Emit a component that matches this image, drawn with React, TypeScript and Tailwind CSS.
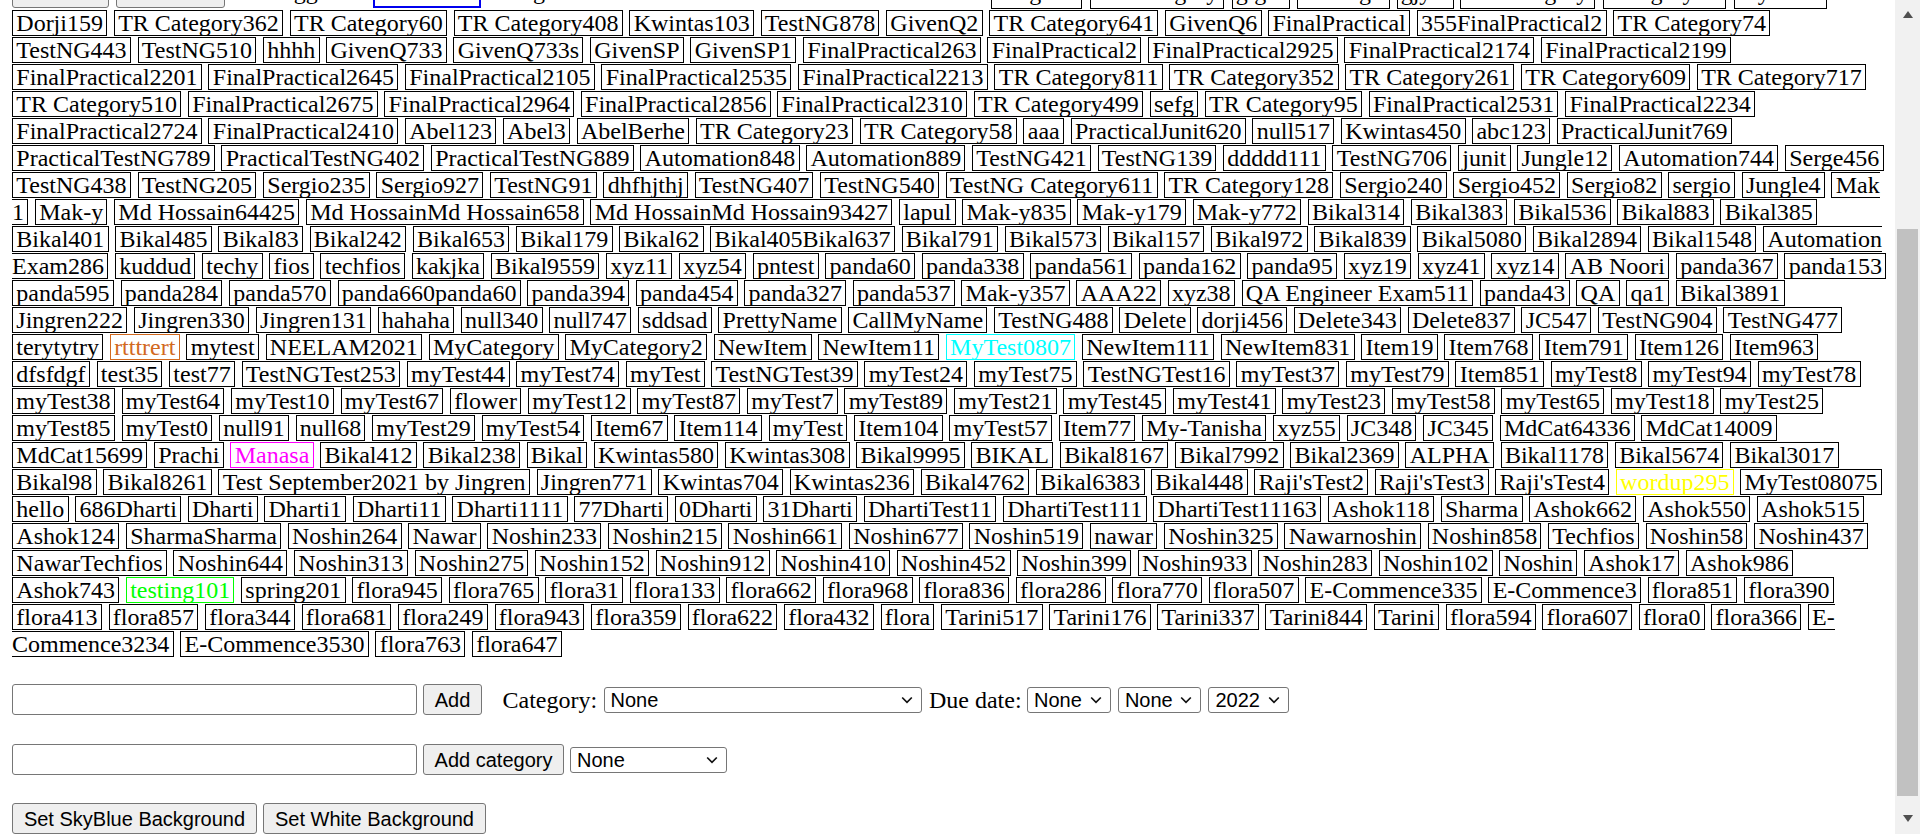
import React from "react";

type Obj = { t: string; c?: "o" | "c" | "m" | "y" | "g"; s?: "a" | "b" };
type It = string | Obj;

const ROWS: It[][] = [
  ["Dorji159", "TR Category362", "TR Category60", "TR Category408", "Kwintas103", "TestNG878", "GivenQ2", "TR Category641", "GivenQ6", "FinalPractical", "355FinalPractical2", "TR Category74"],
  ["TestNG443", "TestNG510", "hhhh", "GivenQ733", "GivenQ733s", "GivenSP", "GivenSP1", "FinalPractical263", "FinalPractical2", "FinalPractical2925", "FinalPractical2174", "FinalPractical2199"],
  ["FinalPractical2201", "FinalPractical2645", "FinalPractical2105", "FinalPractical2535", "FinalPractical2213", "TR Category811", "TR Category352", "TR Category261", "TR Category609", "TR Category717"],
  ["TR Category510", "FinalPractical2675", "FinalPractical2964", "FinalPractical2856", "FinalPractical2310", "TR Category499", "sefg", "TR Category95", "FinalPractical2531", "FinalPractical2234"],
  ["FinalPractical2724", "FinalPractical2410", "Abel123", "Abel3", "AbelBerhe", "TR Category23", "TR Category58", "aaa", "PracticalJunit620", "null517", "Kwintas450", "abc123", "PracticalJunit769"],
  ["PracticalTestNG789", "PracticalTestNG402", "PracticalTestNG889", "Automation848", "Automation889", "TestNG421", "TestNG139", "ddddd111", "TestNG706", "junit", "Jungle12", "Automation744", "Serge456"],
  ["TestNG438", "TestNG205", "Sergio235", "Sergio927", "TestNG91", "dhfhjthj", "TestNG407", "TestNG540", "TestNG Category611", "TR Category128", "Sergio240", "Sergio452", "Sergio82", "sergio", "Jungle4", { t: "Mak", s: "a" }],
  [{ t: "1", s: "b" }, "Mak-y", "Md Hossain64425", "Md HossainMd Hossain658", "Md HossainMd Hossain93427", "lapul", "Mak-y835", "Mak-y179", "Mak-y772", "Bikal314", "Bikal383", "Bikal536", "Bikal883", "Bikal385"],
  ["Bikal401", "Bikal485", "Bikal83", "Bikal242", "Bikal653", "Bikal179", "Bikal62", "Bikal405Bikal637", "Bikal791", "Bikal573", "Bikal157", "Bikal972", "Bikal839", "Bikal5080", "Bikal2894", "Bikal1548", { t: "Automation", s: "a" }],
  [{ t: "Exam286", s: "b" }, "kuddud", "techy", "fios", "techfios", "kakjka", "Bikal9559", "xyz11", "xyz54", "pntest", "panda60", "panda338", "panda561", "panda162", "panda95", "xyz19", "xyz41", "xyz14", "AB Noori", "panda367", "panda153"],
  ["panda595", "panda284", "panda570", "panda660panda60", "panda394", "panda454", "panda327", "panda537", "Mak-y357", "AAA22", "xyz38", "QA Engineer Exam511", "panda43", "QA", "qa1", "Bikal3891"],
  ["Jingren222", "Jingren330", "Jingren131", "hahaha", "null340", "null747", "sddsad", "PrettyName", "CallMyName", "TestNG488", "Delete", "dorji456", "Delete343", "Delete837", "JC547", "TestNG904", "TestNG477"],
  ["terytytry", { t: "rtttrert", c: "o" }, "mytest", "NEELAM2021", "MyCategory", "MyCategory2", "NewItem", "NewItem11", { t: "MyTest0807", c: "c" }, "NewItem111", "NewItem831", "Item19", "Item768", "Item791", "Item126", "Item963"],
  ["dfsfdgf", "test35", "test77", "TestNGTest253", "myTest44", "myTest74", "myTest", "TestNGTest39", "myTest24", "myTest75", "TestNGTest16", "myTest37", "myTest79", "Item851", "myTest8", "myTest94", "myTest78"],
  ["myTest38", "myTest64", "myTest10", "myTest67", "flower", "myTest12", "myTest87", "myTest7", "myTest89", "myTest21", "myTest45", "myTest41", "myTest23", "myTest58", "myTest65", "myTest18", "myTest25"],
  ["myTest85", "myTest0", "null91", "null68", "myTest29", "myTest54", "Item67", "Item114", "myTest", "Item104", "myTest57", "Item77", "My-Tanisha", "xyz55", "JC348", "JC345", "MdCat64336", "MdCat14009"],
  ["MdCat15699", "Prachi", { t: "Manasa", c: "m" }, "Bikal412", "Bikal238", "Bikal", "Kwintas580", "Kwintas308", "Bikal9995", "BIKAL", "Bikal8167", "Bikal7992", "Bikal2369", "ALPHA", "Bikal1178", "Bikal5674", "Bikal3017"],
  ["Bikal98", "Bikal8261", "Test September2021 by Jingren", "Jingren771", "Kwintas704", "Kwintas236", "Bikal4762", "Bikal6383", "Bikal448", "Raji'sTest2", "Raji'sTest3", "Raji'sTest4", { t: "wordup295", c: "y" }, "MyTest08075"],
  ["hello", "686Dharti", "Dharti", "Dharti1", "Dharti11", "Dharti1111", "77Dharti", "0Dharti", "31Dharti", "DhartiTest11", "DhartiTest111", "DhartiTest11163", "Ashok118", "Sharma", "Ashok662", "Ashok550", "Ashok515"],
  ["Ashok124", "SharmaSharma", "Noshin264", "Nawar", "Noshin233", "Noshin215", "Noshin661", "Noshin677", "Noshin519", "nawar", "Noshin325", "Nawarnoshin", "Noshin858", "Techfios", "Noshin58", "Noshin437"],
  ["NawarTechfios", "Noshin644", "Noshin313", "Noshin275", "Noshin152", "Noshin912", "Noshin410", "Noshin452", "Noshin399", "Noshin933", "Noshin283", "Noshin102", "Noshin", "Ashok17", "Ashok986"],
  ["Ashok743", { t: "testing101", c: "g" }, "spring201", "flora945", "flora765", "flora31", "flora133", "flora662", "flora968", "flora836", "flora286", "flora770", "flora507", "E-Commence335", "E-Commence3", "flora851", "flora390"],
  ["flora413", "flora857", "flora344", "flora681", "flora249", "flora943", "flora359", "flora622", "flora432", "flora", "Tarini517", "Tarini176", "Tarini337", "Tarini844", "Tarini", "flora594", "flora607", "flora0", "flora366", { t: "E-", s: "a" }],
  [{ t: "Commence3234", s: "b" }, "E-Commence3530", "flora763", "flora647"],
];

const COLOR: Record<string, string> = {
  o: "border-[#d2691e] text-[#d2691e]",
  c: "border-[#00ffff] text-[#00ffff]",
  m: "border-[#ff00ff] text-[#ff00ff]",
  y: "border-[#ffff00] text-[#ffff00]",
  g: "border-[#00ff00] text-[#00ff00]",
};

function Item({ it }: { it: It }) {
  const o: Obj = typeof it === "string" ? { t: it } : it;
  let side = "border-x px-[3.3px]";
  if (o.s === "a") side = "border-l pl-[3.3px]";
  if (o.s === "b") side = "border-r pr-[3.3px]";
  const col = o.c ? COLOR[o.c] : "border-black text-black";
  return (
    <span className={`box-border h-[26px] shrink-0 whitespace-pre border-y leading-[25px] ${side} ${col}`}>
      {o.t}
    </span>
  );
}

const ctl = "font-['Liberation_Sans',Arial,sans-serif] text-[20px] text-black";
const serif = "font-['Liberation_Serif','Times_New_Roman',serif] text-[24px] text-black";

function Sel({ label, cls }: { label: string; cls: string }) {
  return (
    <div className={`box-border flex h-[26px] shrink-0 items-center justify-between rounded-[3px] border border-[#767676] bg-white pl-[6px] pr-[8px] ${ctl} ${cls}`}>
      <span className="leading-none">{label}</span>
      <svg width="12" height="8" viewBox="0 0 12 8">
        <path d="M1.2 1.5 L6 6.3 L10.8 1.5" stroke="#111" strokeWidth="1.7" fill="none" />
      </svg>
    </div>
  );
}

const btn = `box-border h-[31px] shrink-0 rounded-[3px] border border-[#767676] bg-[#efefef] leading-none ${ctl}`;
const inp = "box-border h-[31px] w-[405px] shrink-0 rounded-[3px] border border-[#767676] bg-white";
const topBox = "box-border h-[26px] shrink-0 overflow-hidden border border-black px-[3px] leading-[17px]";

export default function App() {
  return (
    <div className="flex h-[834px] w-[1920px] overflow-hidden bg-white">
      <div className={`flex min-w-0 flex-1 flex-col overflow-hidden pl-[12px] ${serif}`}>
        {/* partially scrolled-off row */}
        <div className="-mt-[17.4px] flex h-[27px] shrink-0 items-start whitespace-nowrap">
          <span className="box-border h-[25px] w-[97px] shrink-0 rounded-[3px] border border-[#767676] bg-[#efefef]" />
          <span className="ml-[7px] box-border h-[25px] w-[109px] shrink-0 rounded-[3px] border border-[#767676] bg-[#efefef]" />
          <span className="ml-[42px] shrink-0 leading-[17px]">Logged</span>
          <span className="ml-[33px] box-border h-[25px] w-[108px] shrink-0 border-2 border-[#0000ee]" />
          <span className="ml-[25px] shrink-0 leading-[17px]">Log out</span>
          <span className={`ml-[409px] w-[91px] ${topBox}`}>Bing</span>
          <span className={`ml-[8px] w-[134px] ${topBox}`}>TR Category</span>
          <span className={`ml-[8px] w-[58px] ${topBox}`}>gig</span>
          <span className={`ml-[7px] w-[93px] ${topBox}`}>Testing</span>
          <span className={`ml-[7px] w-[57px] ${topBox}`}>gjy</span>
          <span className={`ml-[6px] w-[135px] ${topBox}`}>TR Category1</span>
          <span className={`ml-[8px] w-[123px] ${topBox}`}>Category12</span>
          <span className={`ml-[8px] w-[93px] ${topBox}`}>Jay</span>
        </div>

        {ROWS.map((row, i) => (
          <div key={i} className="flex h-[27px] shrink-0 items-start gap-[6.6px] whitespace-nowrap">
            {row.map((it, j) => (
              <Item key={j} it={it} />
            ))}
          </div>
        ))}

        <div className="mt-[26.6px] flex h-[31px] shrink-0 items-center">
          <input className={inp} />
          <button className={`ml-[6px] w-[59px] ${btn}`}>Add</button>
          <span className="ml-[20.5px] shrink-0 leading-none">Category:</span>
          <Sel label="None" cls="ml-[6.4px] w-[318.4px]" />
          <span className="ml-[7px] shrink-0 leading-none">Due date:</span>
          <Sel label="None" cls="ml-[5.4px] w-[83.6px]" />
          <Sel label="None" cls="ml-[7.4px] w-[83px]" />
          <Sel label="2022" cls="ml-[7.5px] w-[80.5px]" />
        </div>

        <div className="mt-[28.8px] flex h-[31px] shrink-0 items-center">
          <input className={inp} />
          <button className={`ml-[6px] w-[141px] ${btn}`}>Add category</button>
          <Sel label="None" cls="ml-[6px] w-[156.5px]" />
        </div>

        <div className="mt-[28px] flex h-[31px] shrink-0 items-center">
          <button className={`w-[245px] ${btn}`}>Set SkyBlue Background</button>
          <button className={`ml-[6px] w-[223px] ${btn}`}>Set White Background</button>
        </div>
      </div>

      {/* scrollbar */}
      <div className="flex w-[25px] shrink-0 flex-col bg-[#f1f1f1]">
        <div className="flex h-[29px] shrink-0 items-center justify-center">
          <svg width="10" height="7" viewBox="0 0 10 7">
            <path d="M5 0 L10 7 L0 7 Z" fill="#505050" />
          </svg>
        </div>
        <div className="ml-[2px] mt-[200px] h-[567px] w-[21px] shrink-0 bg-[#c1c1c1]" />
        <div className="mt-[7px] flex h-[30px] shrink-0 items-center justify-center">
          <svg width="10" height="7" viewBox="0 0 10 7">
            <path d="M0 0 L10 0 L5 7 Z" fill="#505050" />
          </svg>
        </div>
      </div>
    </div>
  );
}
